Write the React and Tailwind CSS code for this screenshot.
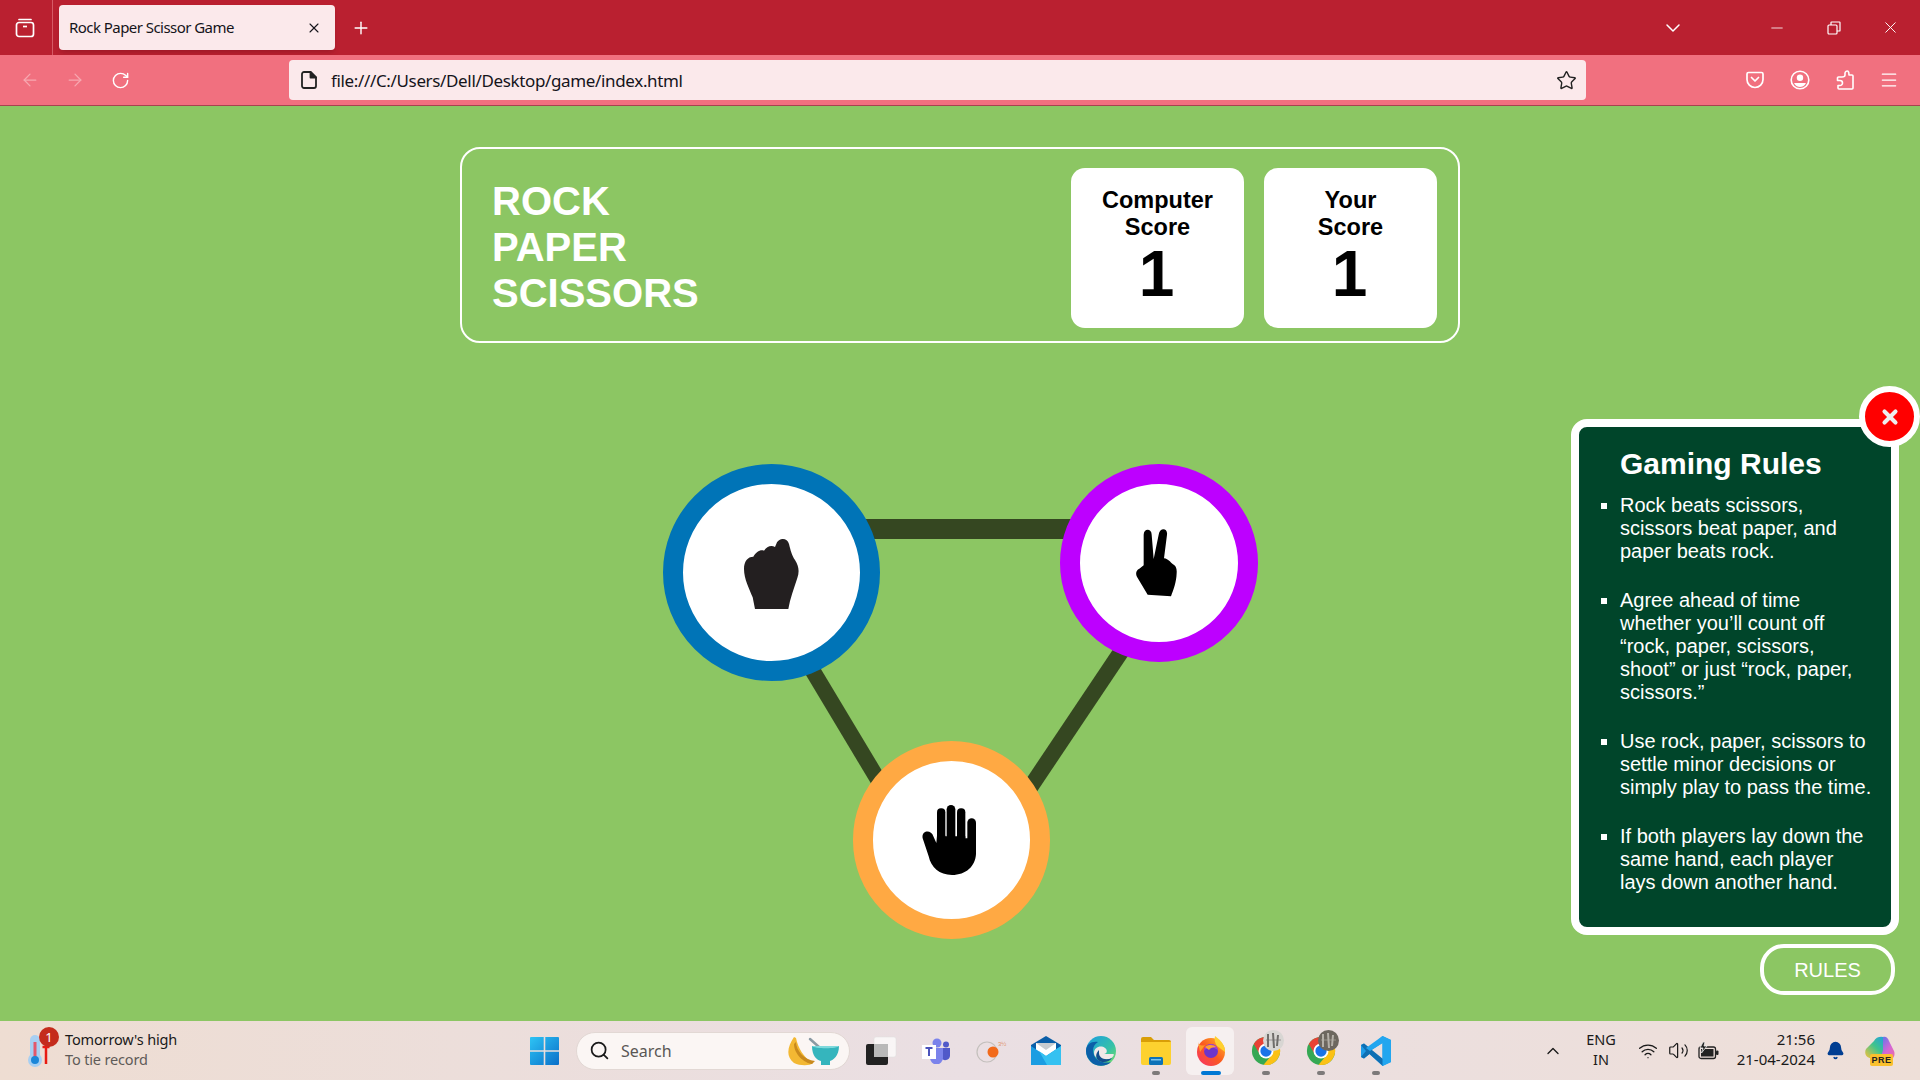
import React from 'react';
import { X, Plus, ArrowLeft, ArrowRight, RotateCw, Star, ChevronDown, ChevronUp, Minus, Search, Menu, Wifi, Volume2, Bell } from 'lucide-react';

const rules = [
    'Rock beats scissors, scissors beat paper, and paper beats rock.',
    'Agree ahead of time whether you’ll count off “rock, paper, scissors, shoot” or just “rock, paper, scissors.”',
    'Use rock, paper, scissors to settle minor decisions or simply play to pass the time.',
    'If both players lay down the same hand, each player lays down another hand.',
];

const FistIcon = () => (
    <svg width="56" height="70" viewBox="130 115 166 210" fill="#231f20" className="mt-[2px]">
        <path d="M165 325 H265 C270 295 282 262 292 232 C299 212 296 195 285 178 C275 163 272 150 267 130 C262 112 240 110 231 125 L225 139 C213 132 200 138 192 150 C180 146 168 155 160 168 C143 168 132 182 132 205 C132 235 148 265 158 290 Z" />
    </svg>
);

const PeaceIcon = () => (
    <svg width="41" height="68" viewBox="137 88 123 204" fill="#000" className="mr-[5px]">
        <path d="M160 105 C160 85 184 85 184 105 L190 178 L205 105 C208 82 233 84 230 105 L221 176 C235 178 240 188 247 193 C256 198 260 205 259 220 C258 248 250 268 242 290 L172 285 L142 235 C134 222 137 212 147 207 L160 197 Z" />
    </svg>
);

const PaperIcon = () => (
    <svg width="54" height="70" viewBox="123 78 162 210" fill="#000" className="mr-[5px]">
        <rect x="168" y="88" width="25" height="100" rx="12" />
        <rect x="197" y="78" width="26" height="110" rx="13" />
        <rect x="228" y="88" width="25" height="100" rx="12" />
        <rect x="259" y="118" width="26" height="90" rx="13" />
        <path d="M168 170 H193 V172 H197 V172 H223 H228 H253 V178 H285 V225 C283 262 255 288 213 288 C175 288 150 265 143 232 L125 178 C120 155 150 150 157 172 L166 192 Z" />
    </svg>
);

const Choice = ({ className, children }) => (
    <div className={`absolute rounded-full bg-white border-[20px] flex items-center justify-center ${className}`}>
        {children}
    </div>
);

const FirefoxViewIcon = () => (
    <svg width="20" height="20" viewBox="0 0 20 20" fill="none" stroke="#fff" strokeWidth="1.7">
        <rect x="1.5" y="4.5" width="17" height="14" rx="2.5" />
        <path d="M4 1.5 H16" strokeLinecap="round" />
        <path d="M8 8.5 H12" />
    </svg>
);

const PageIcon = () => (
    <svg width="16" height="18" viewBox="0 0 16 18" fill="none" stroke="#222" strokeWidth="1.8" strokeLinejoin="round">
        <path d="M3 1 H9.5 L15 6.5 V15 A2 2 0 0 1 13 17 H3 A2 2 0 0 1 1 15 V3 A2 2 0 0 1 3 1 Z" />
        <path d="M9.5 1 V6.5 H15 Z" fill="#222" />
    </svg>
);

const RestoreIcon = () => (
    <svg width="14" height="14" viewBox="0 0 14 14" fill="none" stroke="#fff" strokeWidth="1.2">
        <rect x="1" y="4" width="9" height="9" rx="1" />
        <path d="M4 4 V1.6 A.6 .6 0 0 1 4.6 1 H12.4 A.6 .6 0 0 1 13 1.6 V9.4 A.6 .6 0 0 1 12.4 10 H10" />
    </svg>
);

const PocketIcon = () => (
    <svg width="18" height="18" viewBox="0 0 18 18" fill="none" stroke="#fff" strokeWidth="1.7" strokeLinecap="round" strokeLinejoin="round">
        <path d="M1 3 A1.5 1.5 0 0 1 2.5 1.5 H15.5 A1.5 1.5 0 0 1 17 3 V8.5 A8 8 0 0 1 1 8.5 Z" />
        <path d="M5.5 6.5 L9 10 L12.5 6.5" />
    </svg>
);

const ProfileIcon = () => (
    <svg width="20" height="20" viewBox="0 0 20 20" fill="none">
        <circle cx="10" cy="10" r="8.8" stroke="#fff" strokeWidth="1.6" />
        <circle cx="10" cy="7.8" r="3.2" fill="#fff" />
        <path d="M4 13 H16 C14.5 16 12 17 10 17 C8 17 5.5 16 4 13 Z" fill="#fff" />
    </svg>
);

const PuzzleIcon = () => (
    <svg width="18" height="20" viewBox="0 0 18 20" fill="none" stroke="#fff" strokeWidth="1.6" strokeLinejoin="round">
        <path d="M9 5 V3 A2.2 2.2 0 0 1 12 1.2 C13 1.8 13 3 13 5 H16 A1 1 0 0 1 17 6 V18 A1 1 0 0 1 16 19 H3 A1 1 0 0 1 2 18 V15.5 H4 A2.5 2.5 0 0 0 4 10.5 H1.5 V8 A1 1 0 0 1 2.5 7 H6 A3 2 0 0 0 9 5 Z" />
    </svg>
);

const TabBar = () => (
    <div className="h-[55px] bg-[#ba2030] flex items-center shrink-0">
        <div className="w-[53px] h-full border-r border-[#d65a66] flex items-center justify-center pr-[3px]">
            <FirefoxViewIcon />
        </div>
        <div className="ml-[6px] w-[276px] h-[45px] mb-[5px] mt-[5px] bg-[#fbe9eb] rounded-[4px] shadow-md flex items-center pl-[10px] pr-[13px]">
            <span className="flex-1 text-[15px] text-[#15141a] font-['Noto_Sans',sans-serif] tracking-[-0.55px]">Rock Paper Scissor Game</span>
            <X size={16} color="#15141a" strokeWidth={1.6} />
        </div>
        <div className="ml-[16px] text-white"><Plus size={20} strokeWidth={1.7} /></div>
        <div className="ml-auto flex items-center text-white">
            <div className="w-[40px] flex justify-center mr-[55px]"><ChevronDown size={24} strokeWidth={1.5} /></div>
            <div className="w-[57px] flex justify-center"><Minus size={18} strokeWidth={1.1} /></div>
            <div className="w-[57px] flex justify-center"><RestoreIcon /></div>
            <div className="w-[57px] flex justify-center mr-[1px]"><X size={19} strokeWidth={1.2} /></div>
        </div>
    </div>
);

const ToolBar = () => (
    <div className="h-[51px] bg-[#f1707f] border-b border-[#a64450] flex items-center shrink-0">
        <div className="w-[60px] flex justify-center text-[#f7a8b1]"><ArrowLeft size={20} strokeWidth={1.5} /></div>
        <div className="w-[30px] flex justify-center text-[#f7a8b1]"><ArrowRight size={20} strokeWidth={1.5} /></div>
        <div className="w-[60px] flex justify-center text-white"><RotateCw size={19} strokeWidth={1.8} /></div>
        <div className="ml-[139px] w-[1297px] h-[40px] bg-[#fbe9eb] rounded-[4px] flex items-center pl-[12px] pr-[9px]">
            <PageIcon />
            <span className="ml-[14px] pt-[2px] flex-1 text-[17px] text-[#15141a] font-['Noto_Sans',sans-serif] tracking-[-0.35px]">file:///C:/Users/Dell/Desktop/game/index.html</span>
            <Star size={21} color="#222" strokeWidth={1.6} />
        </div>
        <div className="ml-[146px] flex items-center">
            <div className="w-[45px] flex justify-center"><PocketIcon /></div>
            <div className="w-[45px] flex justify-center"><ProfileIcon /></div>
            <div className="w-[45px] flex justify-center"><PuzzleIcon /></div>
            <div className="w-[44px] flex justify-center text-white"><Menu size={20} strokeWidth={1.5} /></div>
        </div>
    </div>
);

const ScorePanel = () => (
    <div className="mt-[41px] mx-auto w-[1000px] h-[196px] border-[2px] border-white rounded-[20px] flex items-center justify-between pt-[6px] pl-[30px] pr-[21px] shrink-0">
        <h1 className="mt-[-3px] text-[40px] leading-[46px] font-bold text-white">ROCK<br />PAPER<br />SCISSORS</h1>
        <div className="flex gap-[20px]">
            <ScoreCard line1="Computer" value="1" />
            <ScoreCard line1="Your" value="1" />
        </div>
    </div>
);

const ScoreCard = ({ line1, value }) => (
    <div className="w-[173px] h-[160px] bg-white rounded-[14px] flex flex-col items-center pt-[19px] text-black font-bold">
        <div className="text-[23.5px] leading-[27px] text-center">{line1}<br />Score</div>
        <div className="text-[64px] leading-[72px] mt-[-3px] mr-[2px]">{value}</div>
    </div>
);

const Diagram = () => (
    <div className="relative mt-[121px] mx-auto w-[595px] h-[475px] shrink-0">
        <svg className="absolute inset-0" width="595" height="475" stroke="#354721" fill="none">
            <path d="M100 65 H500" strokeWidth="20" />
            <path d="M130 174 L232 344" strokeWidth="16" />
            <path d="M470 170 L350 349" strokeWidth="16" />
        </svg>
        <Choice className="left-0 top-0 w-[217px] h-[217px] border-[#0074b7]"><FistIcon /></Choice>
        <Choice className="left-[397px] top-0 w-[198px] h-[198px] border-[#bd00ff]"><PeaceIcon /></Choice>
        <Choice className="left-[190px] top-[277px] w-[197px] h-[198px] border-[#ffa943]"><PaperIcon /></Choice>
    </div>
);

const RulesPanel = () => (
    <aside className="absolute right-[21px] top-[313px] flex flex-col items-end gap-[9px]">
        <div className="relative w-[328px] h-[516px] bg-[#00452a] border-[8px] border-white rounded-[16px] pt-[20px] pl-[41px] text-white">
            <button className="absolute top-[-41px] right-[-29px] w-[61px] h-[61px] rounded-full bg-[#ff0000] border-[6px] border-white flex items-center justify-center">
                <X size={22} strokeWidth={4.5} color="#eeeeee" />
            </button>
            <h2 className="text-[30px] leading-[34px] font-bold">Gaming Rules</h2>
            <ul className="mt-[13px] w-[253px] list-[square] text-[20px] leading-[23px] flex flex-col gap-[26px]">
                {rules.map((rule) => <li key={rule}>{rule}</li>)}
            </ul>
        </div>
        <button className="mr-[4px] w-[135px] h-[51px] rounded-[24px] border-[4px] border-white text-white text-[20px]">RULES</button>
    </aside>
);

const WindowsLogo = () => (
    <svg width="31" height="30" viewBox="0 0 31 30">
        <defs>
            <linearGradient id="win" x1="0" y1="0" x2="1" y2="1">
                <stop offset="0" stopColor="#2ec4f4" />
                <stop offset="1" stopColor="#0a6fc9" />
            </linearGradient>
        </defs>
        <path fill="url(#win)" d="M1 2 A1 1 0 0 1 2 1 H14.7 V14.2 H1 Z M16.3 1 H29 A1 1 0 0 1 30 2 V14.2 H16.3 Z M1 15.8 H14.7 V29 H2 A1 1 0 0 1 1 28 Z M16.3 15.8 H30 V28 A1 1 0 0 1 29 29 H16.3 Z" />
    </svg>
);

const Thermometer = () => (
    <svg width="26" height="36" viewBox="0 0 26 36">
        <rect x="3" y="2" width="10" height="26" rx="5" fill="#a7cff2" />
        <circle cx="8" cy="27" r="7" fill="#a7cff2" />
        <rect x="6.5" y="9" width="3" height="16" fill="#e3576a" />
        <circle cx="8" cy="27" r="4" fill="#1b86d8" />
        <path d="M19 14 V31" stroke="#e81b12" strokeWidth="2.5" />
        <path d="M15.5 14 H22.5" stroke="#e81b12" strokeWidth="2.5" />
    </svg>
);

const BananaBowl = () => (
    <svg width="54" height="30" viewBox="0 0 54 30">
        <path d="M8 1 C2 10 -1 20 8 27 C14 30 24 30 27 27 C18 22 12 12 10 2 Z" fill="#f3b833" />
        <path d="M10 6 C10 14 18 24 29 25 L26 28 C18 27 8 18 8 8 Z" fill="#c98a1d" />
        <path d="M24 3 L33 11" stroke="#8a9aa3" strokeWidth="2.5" strokeLinecap="round" />
        <path d="M26 10 H53 C53 20 47 24 44 25 V29 H35 V25 C31 24 26 20 26 10 Z" fill="#35b5bd" />
        <path d="M26 10 H53 C52 13 28 13 26 10 Z" fill="#7fd9dc" />
    </svg>
);

const TaskViewIcon = () => (
    <svg width="32" height="30" viewBox="0 0 32 30">
        <rect x="9" y="1" width="22" height="20" rx="2" fill="#fff" fillOpacity=".7" stroke="#ddd" strokeWidth=".5" />
        <rect x="1" y="8" width="22" height="21" rx="2" fill="#222" />
        <rect x="9" y="8" width="14" height="13" fill="#b9b9b9" />
    </svg>
);

const TeamsIcon = () => (
    <svg width="28" height="26" viewBox="0 0 28 26">
        <circle cx="15" cy="5" r="4.5" fill="#7b83eb" />
        <circle cx="24" cy="6.5" r="3" fill="#5059c9" />
        <path d="M19 10 H28 V18 A5 5 0 0 1 19 20 Z" fill="#5059c9" />
        <path d="M8 10 H21 V20 A6.5 6.5 0 0 1 8 20 Z" fill="#7b83eb" />
        <rect x="0" y="7" width="14" height="14" fill="#fff" />
        <path d="M3.5 10 H10.5 M7 10 V18" stroke="#4b53bc" strokeWidth="2" />
    </svg>
);

const RecordIcon = () => (
    <svg width="32" height="24" viewBox="0 0 32 24">
        <circle cx="12" cy="13" r="10" fill="none" stroke="#c4c0bd" strokeWidth="1.2" />
        <circle cx="18" cy="13" r="5.5" fill="#f26a1b" />
        <text x="23" y="7" fontSize="6" fill="#e0946a" fontFamily="Liberation Sans">3½</text>
    </svg>
);

const MailIcon = () => (
    <svg width="30" height="29" viewBox="0 0 30 29">
        <path d="M0 9 L15 0 L30 9 V14 H0 Z" fill="#0a5ea8" />
        <path d="M5 7 H25 V16 L15 20 L5 16 Z" fill="#fff" />
        <path d="M5 7 H25 L15 14 Z" fill="#c8ccd0" />
        <path d="M0 10 L15 20 L30 10 V29 H0 Z" fill="#1b9de2" />
        <path d="M30 10 V29 H16 L8 15 L15 20 Z" fill="#35c1f1" />
    </svg>
);

const EdgeIcon = () => (
    <svg width="30" height="30" viewBox="0 0 30 30">
        <defs>
            <linearGradient id="edgeA" x1="0" y1="0" x2="1" y2="1">
                <stop offset="0" stopColor="#1b9de2" />
                <stop offset=".6" stopColor="#35c1a8" />
                <stop offset="1" stopColor="#7ee05d" />
            </linearGradient>
        </defs>
        <circle cx="15" cy="15" r="15" fill="url(#edgeA)" />
        <path d="M0 15 C0 8 6 5 12 6 C7 9 6 14 8 19 C10 25 18 28 25 26 C20 31 10 31 5 26 C2 23 0 19 0 15 Z" fill="#0c5fa8" />
        <path d="M8 17 C8 11 15 9 19 12 C22 14 21 18 18 18 H27 C30 18 25 24 22 23 C15 25 8 22 8 17 Z" fill="#f0e7e8" />
        <path d="M13 17 C13 22 19 25 26 22 C23 27 15 27 12 24 C9 21 10 17 13 14 Z" fill="#134e8c" />
    </svg>
);

const FolderIcon = () => (
    <svg width="30" height="28" viewBox="0 0 30 28">
        <path d="M0 2 A2 2 0 0 1 2 0 H10 L13 3 H28 A2 2 0 0 1 30 5 V10 H0 Z" fill="#d99e07" />
        <path d="M0 5 H30 V26 A2 2 0 0 1 28 28 H2 A2 2 0 0 1 0 26 Z" fill="#fdd12f" />
        <rect x="8" y="20" width="14" height="8" rx="1.5" fill="#0d72b8" />
        <rect x="10" y="22" width="10" height="1.5" fill="#7cc4ec" />
    </svg>
);

const FirefoxIcon = () => (
    <svg width="30" height="30" viewBox="0 0 30 30">
        <defs>
            <linearGradient id="fx" x1="0" y1="1" x2="1" y2="0">
                <stop offset="0" stopColor="#f7306c" />
                <stop offset=".5" stopColor="#fb5a1f" />
                <stop offset="1" stopColor="#ffbc2a" />
            </linearGradient>
        </defs>
        <circle cx="15" cy="16" r="14" fill="url(#fx)" />
        <path d="M19 0 C26 5 29 10 29 16 L21 10 C19 7 18 4 19 0 Z" fill="#ffd02e" />
        <path d="M2 6 C3 10 6 10 9 9 L4 16 Z" fill="#ff9a26" />
        <circle cx="15" cy="15" r="7" fill="#6d35c9" />
        <path d="M8 15 A7 7 0 0 1 22 15 C20 11 12 10 8 15 Z" fill="#a63fd0" />
        <path d="M9 11 C13 8 18 9 20 11 C17 11 14 12 13 14 Z" fill="#ff9f30" />
    </svg>
);

const ChromeIcon = ({ blob, streak }) => (
    <div className="relative w-[30px] h-[30px]">
        <svg width="30" height="30" viewBox="0 0 32 32">
            <circle cx="16" cy="16" r="15" fill="#35a853" />
            <path d="M16 8.5 H28.99 A15 15 0 0 1 13.4 30.77 L22.5 19.75 Z" fill="#fbc116" />
            <path d="M3.01 8.5 A15 15 0 0 1 28.99 8.5 H16 L9.5 19.75 Z" fill="#e94235" />
            <circle cx="16" cy="16" r="8" fill="#fff" />
            <circle cx="16" cy="16" r="6" fill="#1a73e8" />
        </svg>
        <svg className="absolute left-[12px] top-[-6px]" width="21" height="21" viewBox="0 0 21 21">
            <circle cx="10.5" cy="10.5" r="10.5" fill={blob} />
            <path d="M5 4 V17 M10 3 L11 18 M15 5 L14 16" stroke={streak} strokeWidth="2" />
            <path d="M3 10 H18" stroke={streak} strokeWidth="1" strokeOpacity=".6" />
        </svg>
    </div>
);

const VSCodeIcon = () => (
    <svg width="30" height="30" viewBox="0 0 30 30">
        <path d="M21.5 0 L30 4 V26 L21.5 30 L21.5 7 L9 15 L21.5 23 V30 L8.5 18 L3 22.5 L0 21 V9 L3 7.5 L8.5 12 Z" fill="#1e9ce8" />
        <path d="M0 9 L3 7.5 L22 23 V30 L8.5 18 L3 22.5 L0 21 L5 15 Z" fill="#0f6fb3" />
        <path d="M21.5 0 L30 4 V26 L21.5 30 V7 L9 15 L5 12 Z" fill="#22a6ef" />
    </svg>
);

const CopilotIcon = () => (
    <div className="relative w-[30px] h-[30px]">
        <svg width="30" height="26" viewBox="0 0 30 26">
            <defs>
                <linearGradient id="copA" x1="0" y1="1" x2="1" y2="0">
                    <stop offset="0" stopColor="#f5c23a" />
                    <stop offset=".5" stopColor="#3fc48c" />
                    <stop offset="1" stopColor="#1c9bea" />
                </linearGradient>
                <linearGradient id="copB" x1="0" y1="0" x2="1" y2="1">
                    <stop offset="0" stopColor="#2f7df0" />
                    <stop offset=".6" stopColor="#d466d6" />
                    <stop offset="1" stopColor="#f0709a" />
                </linearGradient>
            </defs>
            <path d="M9 5 C11 0 20 -1 22 4 L17 22 H6 C1 22 -1 17 1 13 Z" fill="url(#copA)" />
            <path d="M18 1 C21 0 23 2 24 5 L29 15 C31 20 27 25 22 25 H10 L13 22 C16 21 17 18 18 14 Z" fill="url(#copB)" />
        </svg>
        <span className="absolute left-[5px] top-[18px] w-[23px] h-[12px] rounded-[2px] bg-[#fbc02d] text-[9px] leading-[12px] font-bold text-center text-[#222] tracking-[0.5px] font-['Liberation_Sans',sans-serif]">PRE</span>
    </div>
);

const BatteryIcon = () => (
    <svg width="21" height="18" viewBox="0 0 21 18" fill="none">
        <rect x="1" y="5" width="16.5" height="11.5" rx="2" stroke="#222" strokeWidth="1.3" />
        <rect x="3" y="7" width="12.5" height="7.5" fill="#222" />
        <rect x="18" y="8.5" width="2.5" height="4.5" rx="1" fill="#222" />
        <path d="M5 0 L2 6 H5 L3.5 11 L9 4 H6 L7 0 Z" fill="#222" stroke="#eee" strokeWidth=".8" />
    </svg>
);

const TaskSlot = ({ children, active, dot }) => (
    <div className="relative w-[55px] h-[48px] flex items-center justify-center shrink-0">
        {active && <span className="absolute inset-y-0 left-[3px] right-[4px] rounded-[6px] bg-[#f6f0f0]" />}
        <div className="relative">{children}</div>
        {active && <span className="absolute bottom-[0px] w-[20px] h-[4px] rounded-full bg-[#0078d4]" />}
        {dot && <span className="absolute bottom-[0px] w-[8px] h-[4px] rounded-full bg-[#7d7a7a]" />}
    </div>
);

const TaskBar = () => (
    <div className="h-[59px] shrink-0 bg-gradient-to-r from-[#eeddd2] via-[#eadfe3] to-[#eedfd8] flex items-center font-['Noto_Sans',sans-serif] text-[#1a1a1a]">
        <div className="w-[517px] pl-[27px] flex items-center shrink-0">
            <div className="relative w-[38px] h-[38px] flex items-center">
                <Thermometer />
                <span className="absolute left-[12px] top-[-5px] w-[20px] h-[20px] rounded-full bg-[#c42b1c] text-white text-[13px] leading-[20px] text-center">1</span>
            </div>
            <div className="text-[14.5px] leading-[20px] tracking-[-0.15px] mt-[-3px]">
                <div>Tomorrow's high</div>
                <div className="text-[#5f5b58]">To tie record</div>
            </div>
        </div>
        <div className="w-[55px] flex justify-center shrink-0"><WindowsLogo /></div>
        <div className="ml-[4px] w-[274px] h-[38px] rounded-full bg-[#fbf6f4] border border-[#e2d8d4] flex items-center pl-[12px] pr-[9px] shrink-0">
            <Search size={21} color="#1a1a1a" strokeWidth={2} />
            <span className="ml-[11px] flex-1 text-[16px] text-[#5a5654]">Search</span>
            <BananaBowl />
        </div>
        <div className="ml-[3px] flex items-center">
            <TaskSlot><TaskViewIcon /></TaskSlot>
            <TaskSlot><TeamsIcon /></TaskSlot>
            <TaskSlot><RecordIcon /></TaskSlot>
            <TaskSlot><MailIcon /></TaskSlot>
            <TaskSlot><EdgeIcon /></TaskSlot>
            <TaskSlot dot><FolderIcon /></TaskSlot>
            <TaskSlot active><FirefoxIcon /></TaskSlot>
            <TaskSlot dot><ChromeIcon blob="#d8d6d3" streak="#6f6d6a" /></TaskSlot>
            <TaskSlot dot><ChromeIcon blob="#6d675f" streak="#b5b0a8" /></TaskSlot>
            <TaskSlot dot><VSCodeIcon /></TaskSlot>
        </div>
        <div className="ml-auto flex items-center pr-[15px]">
            <div className="w-[36px] flex justify-center"><ChevronUp size={20} strokeWidth={1.6} /></div>
            <div className="w-[60px] mr-[2px] text-[14.5px] leading-[20px] text-center mt-[-3px]">ENG<br />IN</div>
            <div className="w-[30px] flex justify-center"><Wifi size={20} strokeWidth={1.6} /></div>
            <div className="w-[30px] flex justify-center"><Volume2 size={21} strokeWidth={1.4} /></div>
            <div className="w-[30px] flex justify-center"><BatteryIcon /></div>
            <div className="w-[92px] text-[15px] leading-[20px] text-right mt-[-3px]">21:56<br />21-04-2024</div>
            <div className="w-[40px] flex justify-center"><Bell size={19} color="#003e92" fill="#003e92" /></div>
            <div className="w-[50px] flex justify-center"><CopilotIcon /></div>
        </div>
    </div>
);

const App = () => {
    return (
        <div className="w-full h-screen flex flex-col overflow-hidden font-['Liberation_Sans',Arial,sans-serif]">
            <TabBar />
            <ToolBar />
            <main className="relative flex-1 bg-[#8cc663] flex flex-col overflow-hidden">
                <ScorePanel />
                <Diagram />
                <RulesPanel />
            </main>
            <TaskBar />
        </div>
    );
};

export default App;
